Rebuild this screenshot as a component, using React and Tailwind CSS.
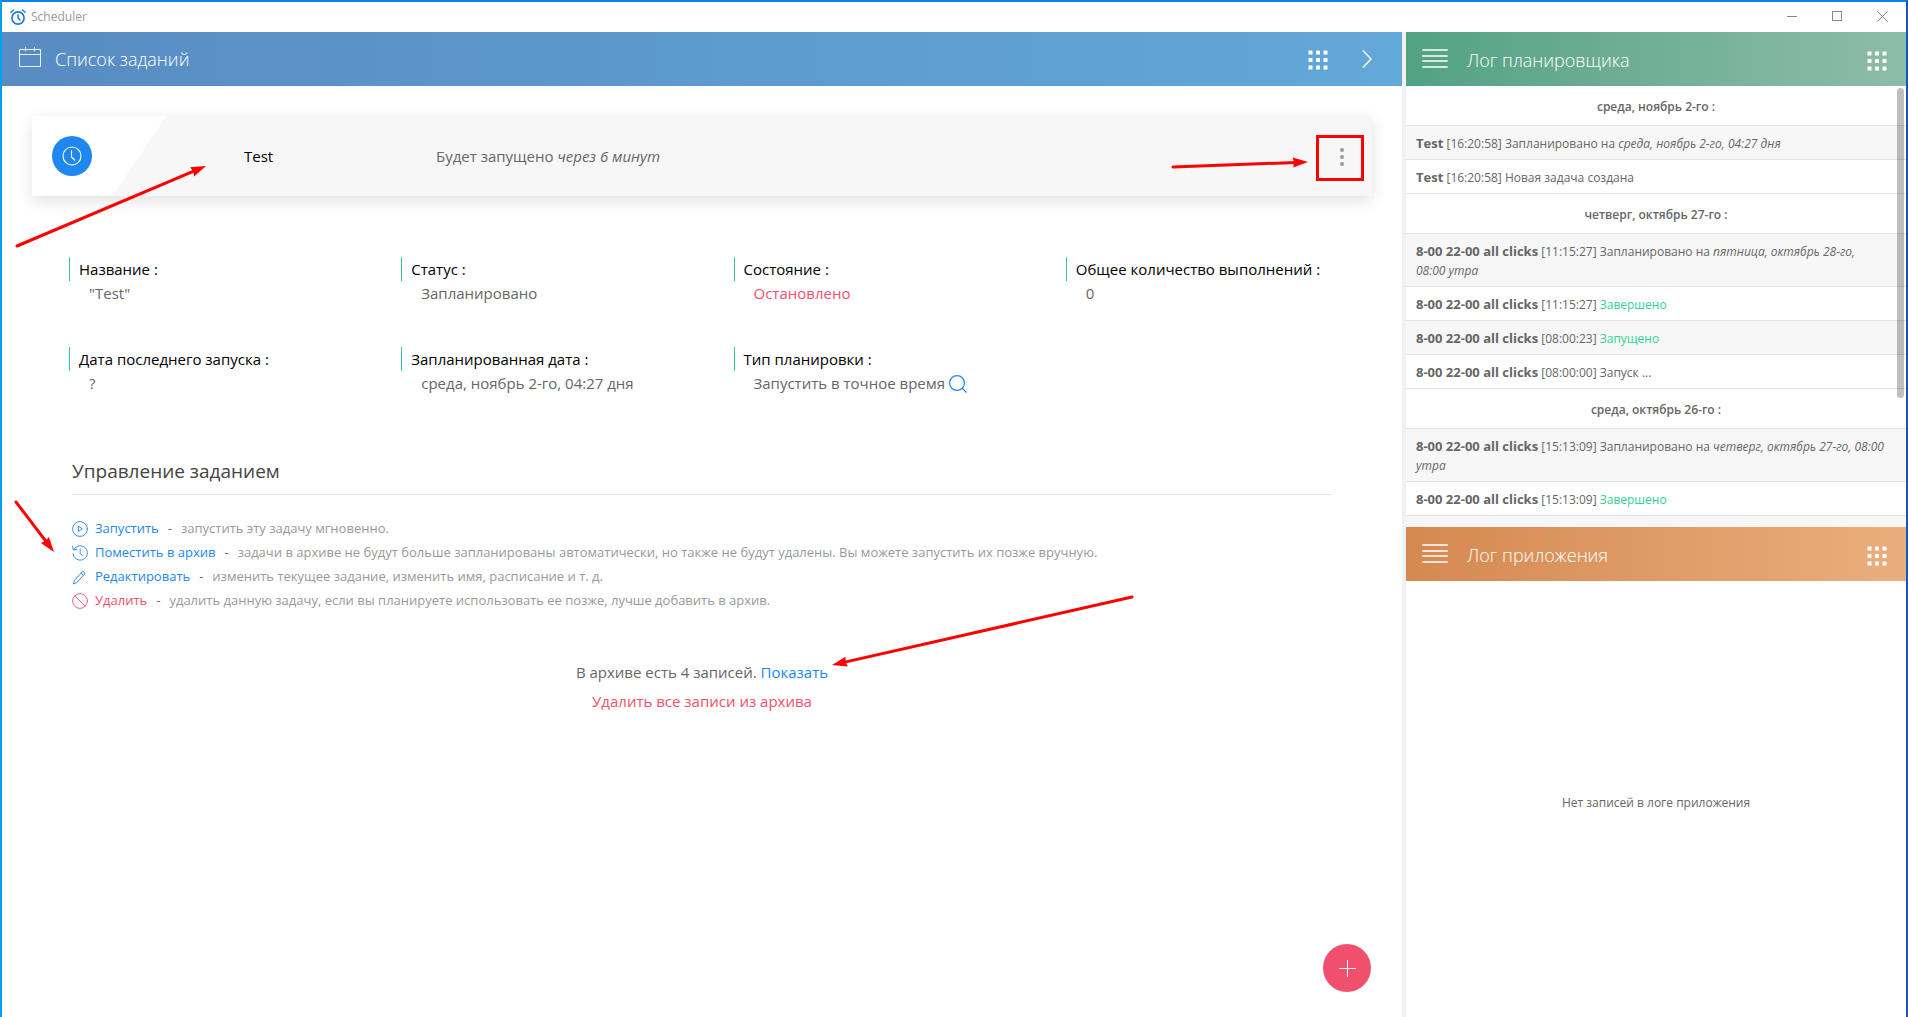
import { useState } from 'react';

const details = [
    { label: 'Название', value: '"Test"' },
    { label: 'Статус', value: 'Запланировано' },
    { label: 'Состояние', value: 'Остановлено', danger: true },
    { label: 'Общее количество выполнений', value: '0' },
    { label: 'Дата последнего запуска', value: '?' },
    { label: 'Запланированная дата', value: 'среда, ноябрь 2-го, 04:27 дня' },
    { label: 'Тип планировки', value: 'Запустить в точное время', search: true },
];

const actions = [
    { icon: 'play', title: 'Запустить', text: 'запустить эту задачу мгновенно.' },
    {
        icon: 'history',
        title: 'Поместить в архив',
        text: 'задачи в архиве не будут больше запланированы автоматически, но также не будут удалены. Вы можете запустить их позже вручную.',
    },
    { icon: 'pencil', title: 'Редактировать', text: 'изменить текущее задание, изменить имя, расписание и т. д.' },
    {
        icon: 'ban',
        title: 'Удалить',
        text: 'удалить данную задачу, если вы планируете использовать ее позже, лучше добавить в архив.',
        danger: true,
    },
];

const log = [
    {
        date: 'среда, ноябрь 2-го :',
        rows: [
            { name: 'Test', time: '16:20:58', text: 'Запланировано на', when: 'среда, ноябрь 2-го, 04:27 дня' },
            { name: 'Test', time: '16:20:58', text: 'Новая задача создана' },
        ],
    },
    {
        date: 'четверг, октябрь 27-го :',
        rows: [
            { name: '8-00 22-00 all clicks', time: '11:15:27', text: 'Запланировано на', when: 'пятница, октябрь 28-го, 08:00\u00a0утра' },
            { name: '8-00 22-00 all clicks', time: '11:15:27', text: 'Завершено', ok: true },
            { name: '8-00 22-00 all clicks', time: '08:00:23', text: 'Запущено', ok: true },
            { name: '8-00 22-00 all clicks', time: '08:00:00', text: 'Запуск ...' },
        ],
    },
    {
        date: 'среда, октябрь 26-го :',
        rows: [
            { name: '8-00 22-00 all clicks', time: '15:13:09', text: 'Запланировано на', when: 'четверг, октябрь 27-го, 08:00 утра' },
            { name: '8-00 22-00 all clicks', time: '15:13:09', text: 'Завершено', ok: true },
        ],
    },
];

const GridDots = () => (
    <svg width="20" height="20" viewBox="0 0 20 20" fill="#fff">
        {[0.5, 8, 15.5].map(y => [0.5, 8, 15.5].map(x => <rect key={`${x}-${y}`} x={x} y={y} width="4" height="4" rx="0.5" />))}
    </svg>
);

const Lines = () => (
    <svg width="26" height="20" viewBox="0 0 26 20" fill="#fff" fillOpacity="0.75">
        {[0, 6, 11, 17].map(y => <rect key={y} y={y} width="26" height="2" rx="1" />)}
    </svg>
);

const ActionIcon = ({ name }) => (
    <svg width="16" height="16" viewBox="0 0 16 16" fill="none" stroke="currentColor" strokeWidth="0.9" strokeLinecap="round" strokeLinejoin="round" className="mt-[2px] shrink-0">
        {name === 'play' && (
            <>
                <circle cx="8" cy="8" r="7.4" />
                <path d="M6.4 5.6v4.8l3.6-2.4z" />
            </>
        )}
        {name === 'history' && (
            <>
                <path d="M2 4.2a7.2 7.2 0 1 1-1 4.6" />
                <path d="M.7 1.2l.6 3.8 3.6-.8M8.2 4v4.4l2.4 2.6" />
            </>
        )}
        {name === 'pencil' && <path d="M1.6 14.6l.9-3.4 7.4-8a1.6 1.6 0 0 1 2.4 2.2l-7.4 8zM9 4.2l2.4 2.2" />}
        {name === 'ban' && (
            <>
                <circle cx="8" cy="8" r="7.4" />
                <path d="M2.8 2.8l10.4 10.4" />
            </>
        )}
    </svg>
);

// Red pointers with a filled head, drawn over the window
const Arrow = ({ x1, y1, x2, y2 }) => {
    const len = Math.hypot(x2 - x1, y2 - y1);
    const angle = (Math.atan2(y2 - y1, x2 - x1) * 180) / Math.PI;
    return (
        <g transform={`translate(${x1} ${y1}) rotate(${angle})`}>
            <line x1="0" y1="0" x2={len - 12} y2="0" stroke="#f00" strokeWidth="3" strokeLinecap="round" />
            <path d={`M${len} 0l-15 -5l1 5l-1 5z`} fill="#f00" />
        </g>
    );
};

const LogHeader = ({ title, className }) => (
    <header className={`flex h-[54px] shrink-0 items-center pl-4 pr-[19px] text-white ${className}`}>
        <Lines />
        <h2 className="ml-[19px] flex-1 pt-[2px] text-[18px] leading-6 font-light">{title}</h2>
        <button type="button" aria-label="Меню" className="pt-1">
            <GridDots />
        </button>
    </header>
);

const LogRow = ({ row, shaded }) => (
    <li className={`border-b border-[#e2e2e2] px-[10px] pt-2 pb-[6px] leading-[19px] ${shaded ? 'bg-[#f7f7f7]' : 'bg-white'}`}>
        <b className="text-[13px]">{row.name}</b> [{row.time}] <span className={row.ok ? 'text-[#32d296]' : ''}>{row.text}</span>
        {row.when && <i> {row.when}</i>}
    </li>
);

export default function App() {
    const [menuOpen, setMenuOpen] = useState(false);

    return (
        <div className="relative flex h-screen flex-col overflow-hidden border-t-2 border-r-2 border-l-2 border-t-[#0a84e0] border-r-[#1857b8] border-l-[#00a2f0] bg-white font-['Open_Sans','Noto_Sans',sans-serif] text-[#666]">
            <div className="flex h-[30px] shrink-0 items-center pl-2 text-[#999]">
                <svg width="16" height="16" viewBox="0 0 16 16" fill="none" stroke="#1976d2" strokeWidth="1.6" strokeLinecap="round">
                    <circle cx="8" cy="9" r="6.1" />
                    <path d="M8 5.6V9l2 2M.9 3.2L3.6 1M15.1 3.2L12.4 1" strokeWidth="1.4" />
                </svg>
                <span className="ml-[5px] flex-1 text-[12px] leading-4">Scheduler</span>
                <div className="flex pr-px pb-[2px]">
                    <button type="button" aria-label="Свернуть" className="flex h-7 w-[45px] items-center justify-center">
                        <svg width="10" height="10" viewBox="0 0 10 10" stroke="#888"><path d="M0 5.5h10" /></svg>
                    </button>
                    <button type="button" aria-label="Развернуть" className="flex h-7 w-[45px] items-center justify-center">
                        <svg width="10" height="10" viewBox="0 0 10 10" fill="none" stroke="#888"><rect x=".5" y=".5" width="9" height="9" /></svg>
                    </button>
                    <button type="button" aria-label="Закрыть" className="flex h-7 w-[46px] items-center justify-center">
                        <svg width="11" height="11" viewBox="0 0 11 11" stroke="#888"><path d="M.5 .5l10 10M10.5 .5l-10 10" /></svg>
                    </button>
                </div>
            </div>

            <div className="flex min-h-0 flex-1">
                <main className="relative flex min-w-0 flex-1 flex-col">
                    <header className="flex h-[54px] shrink-0 items-center bg-linear-to-r from-[#588cc2] to-[#62a8d8] pr-[30px] pl-[17px] text-white">
                        <svg width="22" height="22" viewBox="0 0 22 22" fill="none" stroke="#fff" strokeOpacity="0.85" className="mb-1">
                            <path d="M.5 3.5h21v17H.5zM.5 8.5h21M6.5 1v4.5M15.5 1v4.5" />
                        </svg>
                        <h1 className="ml-[14px] flex-1 text-[18px] leading-6 font-light">Список заданий</h1>
                        <button type="button" aria-label="Меню" className="pt-[2px]"><GridDots /></button>
                        <button type="button" aria-label="Вперёд" className="ml-[34px]">
                            <svg width="10" height="20" viewBox="0 0 10 20" fill="none" stroke="#fff" strokeWidth="1.4"><path d="M1 1.5l8 8.5-8 8.5" /></svg>
                        </button>
                    </header>

                    <section className="mx-[30px] mt-[30px] flex h-20 shrink-0 items-center bg-[linear-gradient(124deg,#fff_0,#fff_111px,#f7f7f7_112px)] pr-[22px] pl-5 shadow-[0_5px_15px_rgba(0,0,0,0.12)]">
                        <span className="flex size-10 items-center justify-center rounded-full bg-[#1e87f0]">
                            <svg width="20" height="20" viewBox="0 0 20 20" fill="none" stroke="#fff" strokeWidth="1.1"><circle cx="10" cy="10" r="9" /><path d="M9.5 4v7l3.5 3.5" /></svg>
                        </span>
                        <span className="ml-[152px] w-[192px] text-[15px] leading-6 text-black">Test</span>
                        <span className="flex-1 text-[15px] leading-6">Будет запущено <i>через 6 минут</i></span>
                        <button type="button" aria-label="Действия" aria-expanded={menuOpen} onClick={() => setMenuOpen(!menuOpen)} className="flex size-5 items-center justify-center">
                            <svg width="20" height="20" viewBox="0 0 20 20" fill="#999"><circle cx="12" cy="4" r="2" /><circle cx="12" cy="11" r="2" /><circle cx="12" cy="18" r="2" /></svg>
                        </button>
                    </section>

                    <dl className="mt-[61px] mr-1 ml-[67px] grid grid-cols-4 gap-y-[42px] text-[15px] leading-6">
                        {details.map(item => (
                            <div key={item.label}>
                                <dt className="border-l border-[#32c99a] pl-[9px] text-black">{item.label} :</dt>
                                <dd className={`flex items-center gap-1 pl-5 ${item.danger ? 'text-[#f0506e]' : ''}`}>
                                    {item.value}
                                    {item.search && (
                                        <button type="button" aria-label="Подробнее" className="pt-[2px] text-[#1e87f0]">
                                            <svg width="18" height="18" viewBox="0 0 18 18" fill="none" stroke="currentColor" strokeWidth="1.2"><circle cx="8" cy="8" r="7.4" /><path d="M13 13l4.5 4.5" /></svg>
                                        </button>
                                    )}
                                </dd>
                            </div>
                        ))}
                    </dl>

                    <section className="mt-[60px] mr-[70px] ml-[70px]">
                        <h2 className="border-b border-[#e5e5e5] pb-[7px] text-[19px] leading-8 text-[#444]">Управление заданием</h2>
                        <ul className="mt-[21px] text-[13px] leading-6 text-[#999]">
                            {actions.map(action => (
                                <li key={action.title} className="flex items-center">
                                    <a href="#" className={`flex items-center gap-[7px] ${action.danger ? 'text-[#f0506e]' : 'text-[#1e87f0]'}`}>
                                        <ActionIcon name={action.icon} />
                                        {action.title}
                                    </a>
                                    <span className="mx-[9px] text-[#666]">-</span>
                                    {action.text}
                                </li>
                            ))}
                        </ul>
                    </section>

                    <div className="mt-12 flex flex-col items-center gap-[5px] text-[15px] leading-6">
                        <p>В архиве есть 4 записей. <a href="#" className="text-[#1e87f0]">Показать</a></p>
                        <a href="#" className="text-[#f0506e]">Удалить все записи из архива</a>
                    </div>

                    <button type="button" aria-label="Добавить" className="absolute right-[31px] bottom-[25px] flex size-12 items-center justify-center rounded-full bg-[#f0506e]">
                        <svg width="17" height="17" viewBox="0 0 17 17" stroke="#fff"><path d="M8.5 0v17M0 8.5h17" /></svg>
                    </button>
                </main>

                <aside className="grid w-[504px] shrink-0 grid-rows-[495fr_490fr] border-l-4 border-[#f1f1f1] text-[12px]">
                    <section className="flex min-h-0 flex-col overflow-hidden">
                        <LogHeader title="Лог планировщика" className="bg-linear-to-r from-[#52a284] to-[#8ebcaa]" />
                        <div className="relative min-h-0 flex-1 overflow-hidden bg-[#f7f7f7]">
                            {log.map(group => (
                                <div key={group.date}>
                                    <h3 className="border-b border-[#e2e2e2] bg-white pt-[11px] pb-[9px] text-center leading-[19px] font-semibold">{group.date}</h3>
                                    <ul>
                                        {group.rows.map((row, i) => <LogRow key={i} row={row} shaded={i % 2 === 0} />)}
                                    </ul>
                                </div>
                            ))}
                            <div className="absolute top-[2px] right-[2px] h-[310px] w-[7px] rounded-full bg-black/25"></div>
                        </div>
                    </section>
                    <section className="flex min-h-0 flex-col">
                        <LogHeader title="Лог приложения" className="bg-linear-to-r from-[#d48950] to-[#eaae7e]" />
                        <p className="flex flex-1 items-center justify-center pt-2">Нет записей в логе приложения</p>
                    </section>
                </aside>
            </div>

            <svg className="pointer-events-none absolute -top-[2px] -left-[2px]" width="1400" height="700" viewBox="0 0 1400 700">
                <Arrow x1={17} y1={246} x2={206} y2={166} />
                <Arrow x1={1173} y1={167} x2={1308} y2={162} />
                <Arrow x1={16} y1={502} x2={54} y2={552} />
                <Arrow x1={1132} y1={597} x2={832} y2={665} />
                <rect x="1317.5" y="136.5" width="45" height="43" fill="none" stroke="#f00" strokeWidth="3" />
            </svg>
        </div>
    );
}
